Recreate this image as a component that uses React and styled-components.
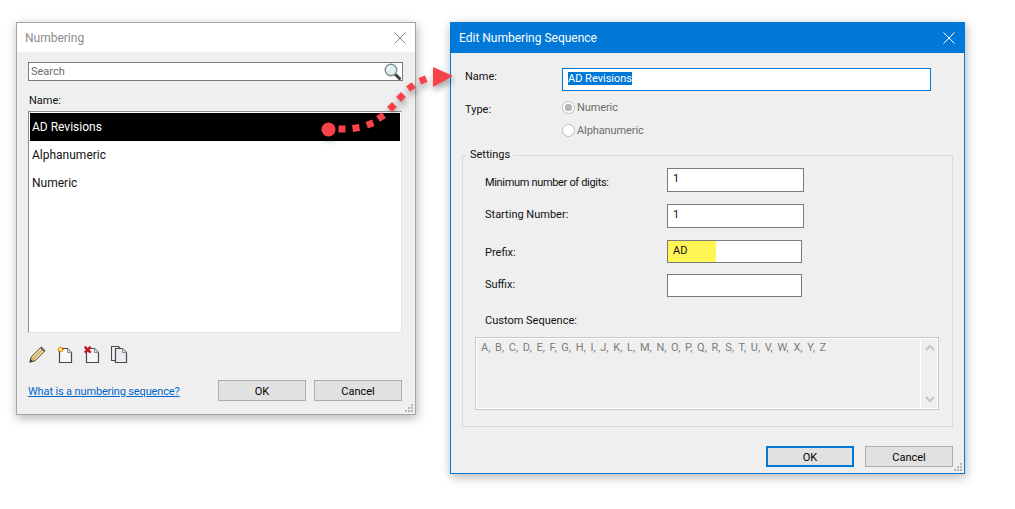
import React from 'react';
import styled, { createGlobalStyle } from 'styled-components';

const GlobalStyle = createGlobalStyle`
  html, body {
    margin: 0;
    background: #fff;
  }
  * {
    box-sizing: border-box;
  }
  #root {
    font-family: Roboto, 'Noto Sans', 'Liberation Sans', sans-serif;
    font-size: 11px;
    color: #111;
  }
`;

const Page = styled.div`
  position: relative;
  width: 1015px;
  height: 509px;
  overflow: hidden;
  display: flex;
  align-items: flex-start;
  gap: 34px;
  padding: 22px 0 0 16px;
`;

const Dialog = styled.div`
  position: relative;
  flex: none;
  width: ${(p) => p.$width}px;
  height: ${(p) => p.$height}px;
  display: flex;
  flex-direction: column;
  background: #efefef;
  border: 1px solid ${(p) => (p.$active ? '#0078d7' : '#a6a6a6')};
  box-shadow: 1px 3px 10px rgba(0, 0, 0, 0.3);
`;

const TitleBar = styled.div`
  flex: none;
  height: ${(p) => (p.$active ? 30 : 29)}px;
  display: flex;
  align-items: center;
  justify-content: space-between;
  padding: 0 9px 0 8px;
  font-size: 12px;
  background: ${(p) => (p.$active ? '#0078d7' : '#fff')};
  color: ${(p) => (p.$active ? '#fff' : '#8c8c8c')};
`;

const Body = styled.div`
  flex: 1;
  display: flex;
  flex-direction: column;
  padding: ${(p) => p.$padding};
`;

const SearchBox = styled.div`
  flex: none;
  width: 375px;
  height: 19px;
  display: flex;
  align-items: center;
  justify-content: space-between;
  padding: 0 1px 0 2px;
  background: #fff;
  border: 1px solid #7a7a7a;
  color: #6d6d6d;
`;

const ListLabel = styled.div`
  margin-top: 12px;
  height: 15px;
  line-height: 16px;
  padding-left: 1px;
`;

const List = styled.div`
  flex: none;
  width: 374px;
  height: 222px;
  margin-top: 3px;
  background: #fff;
  padding: 1px 1px 0 1px;
  border: 1px solid;
  border-color: #8f8f8f #e3e3e3 #e3e3e3 #8f8f8f;
`;

const ListRow = styled.div`
  height: 28px;
  line-height: 28px;
  padding-left: 2px;
  font-size: 12px;
  background: ${(p) => (p.$selected ? '#000' : 'transparent')};
  color: ${(p) => (p.$selected ? '#fff' : '#111')};
`;

const IconRow = styled.div`
  display: flex;
  gap: 11px;
  margin-top: 13px;
  height: 18px;
  padding-left: 1px;
`;

const Footer = styled.div`
  display: flex;
  align-items: center;
  margin-top: 16px;
  padding-right: 13px;
`;

const HelpLink = styled.a`
  color: #0066cc;
  text-decoration: underline;
  letter-spacing: -0.14px;
  margin-right: auto;
  padding-top: 1px;
`;

const Button = styled.div`
  width: 88px;
  height: 21px;
  display: flex;
  align-items: center;
  justify-content: center;
  padding-top: 1px;
  background: #e1e1e1;
  border: ${(p) => (p.$default ? '2px solid #0078d7' : '1px solid #adadad')};
  color: #000;
  margin-left: ${(p) => p.$gap || 0}px;
`;

const FormRow = styled.div`
  display: flex;
  align-items: flex-start;
  height: ${(p) => p.$height}px;
`;

const RowLabel = styled.div`
  flex: none;
  width: ${(p) => p.$width}px;
  padding-top: ${(p) => p.$top || 0}px;
  padding-left: ${(p) => p.$indent}px;
  line-height: 16px;
  letter-spacing: ${(p) => (p.$tight ? '-0.33px' : 'normal')};
`;

const NameField = styled.div`
  width: 369px;
  height: 23px;
  padding: 3px 5px 0;
  display: flex;
  align-items: flex-start;
  background: #fff;
  border: 1px solid #0078d7;
`;

const Selected = styled.span`
  background: #0078d7;
  color: #fff;
  line-height: 13px;
`;

const Radio = styled.div`
  display: flex;
  align-items: center;
  gap: 2px;
  color: #6d6d6d;
  height: 16px;
  margin-top: -2px;
  letter-spacing: -0.1px;
`;

const RadioDot = styled.span`
  width: 13px;
  height: 13px;
  border-radius: 50%;
  border: 1px solid #bcbcbc;
  background: ${(p) => (p.$checked ? 'radial-gradient(circle, #b5b5b5 0 3.5px, #fff 4px)' : '#fff')};
`;

const Settings = styled.fieldset`
  margin: -6px 0 0;
  padding: 6px 12px 0;
  height: 279px;
  border: 1px solid #d9d9d9;
  min-inline-size: 0;
`;

const Legend = styled.legend`
  padding: 0 3px;
  margin-left: -8px;
  line-height: 14px;
`;

const Field = styled.div`
  width: ${(p) => p.$width}px;
  height: ${(p) => p.$height || 24}px;
  padding: 0 0 0 5px;
  line-height: ${(p) => (p.$height ? p.$height - 4 : 20)}px;
  background: #fff;
  border: 1px solid #7a7a7a;
  background-image: ${(p) =>
    p.$highlight ? 'linear-gradient(to right, #fff555 48px, transparent 48px)' : 'none'};
`;

const SequenceBox = styled.div`
  display: flex;
  width: 464px;
  height: 73px;
  border: 1px solid #c9c9c9;
  box-shadow: inset 0 0 0 1px #fff;
  color: #7c7c7c;
`;

const SequenceText = styled.div`
  flex: 1;
  padding: 2px 0 0 5px;
  line-height: 16px;
  word-spacing: 2px;
`;

const ScrollTrack = styled.div`
  flex: none;
  width: 18px;
  display: flex;
  flex-direction: column;
  justify-content: space-between;
  align-items: center;
  padding: 6px 0;
  border-left: 1px solid #fff;
`;

const DialogButtons = styled.div`
  display: flex;
  justify-content: flex-end;
  margin-top: 19px;
`;

const Grip = styled.svg`
  position: absolute;
  right: 1px;
  bottom: 1px;
`;

const CloseIcon = ({ color }) => (
  <svg width="12" height="12" viewBox="0 0 12 12">
    <path d="M.5.5l11 11M11.5.5l-11 11" stroke={color} strokeWidth="1" fill="none" />
  </svg>
);

const GripIcon = () => (
  <Grip width="10" height="10" viewBox="0 0 10 10">
    <path d="M7 1h2v2H7zM4 4h2v2H4zM7 4h2v2H7zM1 7h2v2H1zM4 7h2v2H4zM7 7h2v2H7z" fill="#b5b5b5" />
  </Grip>
);

const SearchIcon = () => (
  <svg width="17" height="17" viewBox="0 0 17 17">
    <path d="M10.500 10.500l5 5" stroke="#3d3d3d" strokeWidth="3" strokeLinecap="round" />
    <circle cx="7" cy="7" r="5.800" fill="#dcefee" stroke="#7e8f8f" strokeWidth="1.400" />
    <path d="M3.500 6.500a3.500 3.500 0 0 1 3-3" stroke="#fff" strokeWidth="1.400" fill="none" />
  </svg>
);

const PencilIcon = () => (
  <svg width="17" height="17" viewBox="0 0 17 17">
    <path d="M.8 16.200l1.300-5L12.300 1l3.700 3.700L5.800 14.900z" fill="#d9a94f" stroke="#4c4c4c" strokeWidth="1" />
    <path d="M3.400 11.600l9.600-9.600M5.400 13.600l9.600-9.600" stroke="#f3e8c0" strokeWidth="1.200" />
    <path d="M.8 16.200l.8-3 2.200 2.200z" fill="#333" />
    <path d="M11.200 2.100l3.700 3.700 1.100-1.100L12.300 1z" fill="#555" />
  </svg>
);

const Sheet = () => (
  <>
    <path d="M2.500 2.500h8l4 4v10h-12z" fill="#f7f7f8" stroke="#454a50" strokeWidth="1.200" />
    <path d="M10.500 2.500v4h4" fill="#d5d8dd" stroke="#8b8f94" strokeWidth="1" />
  </>
);

const NewIcon = () => (
  <svg width="16" height="17" viewBox="0 0 16 17">
    <Sheet />
    <path d="M3.500 0l.8 1.700 1.700-.8-.6 1.800 1.800.8-1.800.8.6 1.800-1.700-.8-.8 1.700-.8-1.700-1.700.8.600-1.800L0 3.500l1.800-.8-.6-1.800 1.700.8z" fill="#ef6f10" />
    <circle cx="3.500" cy="3.500" r="1.700" fill="#ffe14d" />
  </svg>
);

const DeleteIcon = () => (
  <svg width="16" height="17" viewBox="0 0 16 17">
    <Sheet />
    <path d="M.8.800l5.800 5.800M6.600.800L.8 6.600" stroke="#c8121c" strokeWidth="2.400" />
  </svg>
);

const CopyIcon = () => (
  <svg width="17" height="17" viewBox="0 0 17 17">
    <path d="M4.500 14.500h-4v-14h7l1.500 1.500" fill="none" stroke="#454a50" strokeWidth="1.100" />
    <path d="M4.500 2.500h7l4 4v10h-11z" fill="#e9ebef" stroke="#454a50" strokeWidth="1.200" />
    <path d="M11.500 2.500v4h4" fill="#d5d8dd" stroke="#8b8f94" strokeWidth="1" />
  </svg>
);

const Chevron = ({ up }) => (
  <svg width="10" height="7" viewBox="0 0 10 7">
    <path d={up ? 'M1 6l4-4 4 4' : 'M1 1l4 4 4-4'} fill="none" stroke="#c4c4c4" strokeWidth="2" />
  </svg>
);

const Overlay = styled.svg`
  position: absolute;
  left: 0;
  top: 0;
  pointer-events: none;
  filter: drop-shadow(1px 4px 3px rgba(0, 0, 0, 0.35));
`;

const dots = [
  [342, 129, 0],
  [356, 128, -8],
  [370, 124, -20],
  [381, 117, -32],
  [392, 107, -45],
  [401, 97, -45],
  [411, 87, -35],
  [423, 80, -20],
];

const CalloutArrow = () => (
  <Overlay width="1015" height="509">
    <circle cx="328.500" cy="129.500" r="7" fill="#f8424a" />
    {dots.map(([x, y, r]) => (
      <rect key={x} x={x - 3.500} y={y - 3.500} width="7" height="7" fill="#f8424a" transform={`rotate(${r} ${x} ${y})`} />
    ))}
    <path d="M433 67l20 9-20 11z" fill="#f8424a" />
  </Overlay>
);

const letters = 'A, B, C, D, E, F, G, H, I, J, K, L, M, N, O, P, Q, R, S, T, U, V, W, X, Y, Z';

export default function App() {
  return (
    <Page>
      <GlobalStyle />
      <Dialog $width={400} $height={393}>
        <TitleBar>
          Numbering
          <CloseIcon color="#8c8c8c" />
        </TitleBar>
        <Body $padding="10px 0 0 11px">
          <SearchBox>
            Search
            <SearchIcon />
          </SearchBox>
          <ListLabel>Name:</ListLabel>
          <List>
            <ListRow $selected>AD Revisions</ListRow>
            <ListRow>Alphanumeric</ListRow>
            <ListRow>Numeric</ListRow>
          </List>
          <IconRow>
            <PencilIcon />
            <NewIcon />
            <DeleteIcon />
            <CopyIcon />
          </IconRow>
          <Footer>
            <HelpLink>What is a numbering sequence?</HelpLink>
            <Button>OK</Button>
            <Button $gap={8}>Cancel</Button>
          </Footer>
        </Body>
        <GripIcon />
      </Dialog>

      <Dialog $active $width={515} $height={452}>
        <TitleBar $active>
          Edit Numbering Sequence
          <CloseIcon color="#fff" />
        </TitleBar>
        <Body $padding="15px 11px 0 11px">
          <FormRow $height={33}>
            <RowLabel $width={100} $top={1} $indent={3}>Name:</RowLabel>
            <NameField>
              <Selected>AD Revisions</Selected>
            </NameField>
          </FormRow>
          <FormRow $height={23}>
            <RowLabel $width={100} $top={1} $indent={3}>Type:</RowLabel>
            <Radio>
              <RadioDot $checked />
              Numeric
            </Radio>
          </FormRow>
          <FormRow $height={30}>
            <RowLabel $width={100} />
            <Radio>
              <RadioDot />
              Alphanumeric
            </Radio>
          </FormRow>
          <Settings>
            <Legend>Settings</Legend>
            <FormRow $height={36}>
              <RowLabel $width={192} $top={7} $indent={10} $tight>Minimum number of digits:</RowLabel>
              <Field $width={137}>1</Field>
            </FormRow>
            <FormRow $height={36}>
              <RowLabel $width={192} $top={3} $indent={10}>Starting Number:</RowLabel>
              <Field $width={137}>1</Field>
            </FormRow>
            <FormRow $height={34}>
              <RowLabel $width={192} $top={5} $indent={10}>Prefix:</RowLabel>
              <Field $width={135} $height={23} $highlight>AD</Field>
            </FormRow>
            <FormRow $height={36}>
              <RowLabel $width={192} $top={3} $indent={10}>Suffix:</RowLabel>
              <Field $width={135} $height={23} />
            </FormRow>
            <FormRow $height={27}>
              <RowLabel $width={192} $top={3} $indent={10}>Custom Sequence:</RowLabel>
            </FormRow>
            <SequenceBox>
              <SequenceText>{letters}</SequenceText>
              <ScrollTrack>
                <Chevron up />
                <Chevron />
              </ScrollTrack>
            </SequenceBox>
          </Settings>
          <DialogButtons>
            <Button $default>OK</Button>
            <Button $gap={11}>Cancel</Button>
          </DialogButtons>
        </Body>
        <GripIcon />
      </Dialog>
      <CalloutArrow />
    </Page>
  );
}
